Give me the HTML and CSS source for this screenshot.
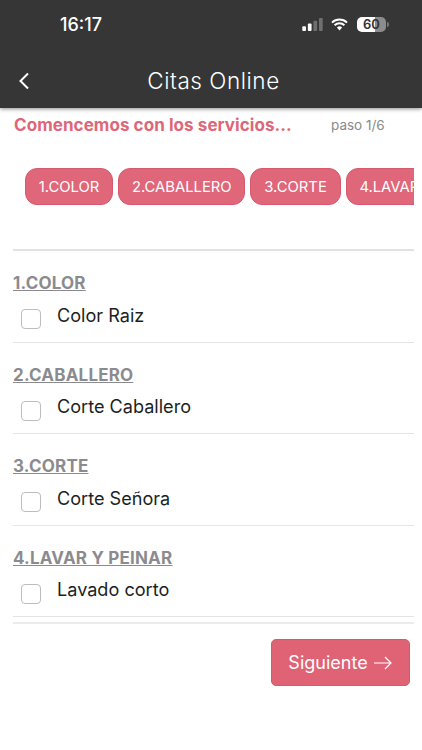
FILE: index.html
```
<!DOCTYPE html>
<html lang="es">
<head>
<meta charset="utf-8">
<title>Citas Online</title>
<link rel="stylesheet" href="styles.css">
</head>
<body>
<header class="appbar">
  <div class="status">
    <span class="time">16:17</span>
    <div class="status-icons">
      <svg class="signal" width="22" height="14" viewBox="0 0 22 14"><rect x="0" y="9" width="4" height="5" rx="1" fill="#fff"/><rect x="6" y="6" width="4" height="8" rx="1" fill="#fff"/><rect x="12" y="3" width="4" height="11" rx="1" fill="#6f6f6f"/><rect x="18" y="0" width="4" height="14" rx="1" fill="#6f6f6f"/></svg>
      <svg class="wifi" width="17" height="13" viewBox="0 0 17 13"><path d="M1 4.6a10.8 10.8 0 0 1 15 0M3.6 7.3a7 7 0 0 1 9.8 0" fill="none" stroke="#fff" stroke-width="2"/><path d="M5.9 9.5a3.7 3.7 0 0 1 5.2 0L8.5 12.4z" fill="#fff"/></svg>
      <div class="battery"><span class="battery-num">60</span></div>
      <span class="battery-tip"></span>
    </div>
  </div>
  <div class="navrow">
    <svg class="back" width="12" height="18" viewBox="0 0 12 18"><path d="M10 1.5 2.5 9l7.5 7.5" fill="none" stroke="#fff" stroke-width="2"/></svg>
    <h1 class="title">Citas Online</h1>
  </div>
</header>
<main class="content">
  <div class="lead">
    <h2 class="lead-title">Comencemos con los servicios...</h2>
    <span class="step">paso 1/6</span>
  </div>
  <div class="chips">
    <span class="chip">1.COLOR</span>
    <span class="chip">2.CABALLERO</span>
    <span class="chip">3.CORTE</span>
    <span class="chip">4.LAVAR Y PEINAR</span>
  </div>
  <div class="list">
    <section class="group">
      <h3 class="group-title">1.COLOR</h3>
      <label class="item"><span class="check"></span><span class="item-name">Color Raiz</span></label>
    </section>
    <section class="group">
      <h3 class="group-title">2.CABALLERO</h3>
      <label class="item"><span class="check"></span><span class="item-name">Corte Caballero</span></label>
    </section>
    <section class="group">
      <h3 class="group-title">3.CORTE</h3>
      <label class="item"><span class="check"></span><span class="item-name">Corte Señora</span></label>
    </section>
    <section class="group">
      <h3 class="group-title">4.LAVAR Y PEINAR</h3>
      <label class="item"><span class="check"></span><span class="item-name">Lavado corto</span></label>
    </section>
  </div>
  <div class="footer">
    <button class="next" type="button">Siguiente<svg class="arrow" width="18" height="14" viewBox="0 0 18 14"><path d="M0 7h17M11 1l6 6-6 6" fill="none" stroke="#fff" stroke-width="1.2"/></svg></button>
  </div>
</main>
</body>
</html>
```
FILE: styles.css
```
* { box-sizing: border-box; }
html, body { margin: 0; padding: 0; }
body {
  width: 422px;
  height: 750px;
  overflow: hidden;
  background: #fff;
  font-family: Inter, "Liberation Sans", sans-serif;
  color: #212529;
}
.appbar {
  height: 108px;
  background: #363636;
  box-shadow: 0 1px 4px rgba(0, 0, 0, 0.45);
  color: #fff;
  position: relative;
}
.status {
  height: 48px;
  padding: 16px 33px 0 60px;
  display: flex;
  justify-content: space-between;
  align-items: flex-start;
}
.time { font-size: 18px; font-weight: 500; line-height: 18px; }
.status-icons { display: flex; align-items: center; gap: 8px; height: 18px; margin-top: -1px; }
.signal { width: 21px; height: 13px; }
.battery {
  width: 29px;
  height: 15px;
  margin-left: 1px;
  border-radius: 5px;
  background: linear-gradient(90deg, #fff 0 62%, #8c8c8c 62% 100%);
  display: flex;
  align-items: center;
  justify-content: center;
}
.battery-num { color: #333; font-size: 13px; font-weight: 600; line-height: 15px; }
.battery-tip { width: 2px; height: 5px; margin-left: -7px; background: #777; border-radius: 0 2px 2px 0; }
.navrow {
  height: 60px;
  position: relative;
  display: flex;
  align-items: center;
  justify-content: center;
  padding-bottom: 4px;
  padding-top: 9px;
}
.back { position: absolute; left: 18px; top: 24px; }
.title {
  margin: 0 0 0 5px;
  font-family: Inter, sans-serif;
  font-size: 22.5px;
  font-weight: 300;
  letter-spacing: 0.55px;
  line-height: 28px;
}
.content { padding: 0 8px 0 13px; }
.lead {
  display: flex;
  align-items: center;
  height: 33px;
  padding: 0 0 0 1px;
}
.lead-title {
  margin: 0;
  width: 317px;
  font-size: 17px;
  font-weight: 700;
  letter-spacing: 0.07px;
  color: #dd6679;
}
.step { font-size: 13.5px; color: #8a8a8a; }
.chips {
  margin-top: 27px;
  padding-left: 12px;
  display: flex;
  gap: 5px;
  width: 401px;
  overflow: hidden;
  height: 83px;
  border-bottom: 2px solid #e2e2e2;
  align-items: flex-start;
}
.chip {
  flex: none;
  height: 37px;
  padding: 0 12.8px;
  display: flex;
  align-items: center;
  font-size: 14.8px;
  color: #fff;
  background: #e0667a;
  border: 1px solid #d65a6e;
  border-radius: 12px;
}
.list { width: 401px; }
.group {
  height: 91.5px;
  border-bottom: 1px solid #e4e4e4;
  padding-top: 22px;
}
.group-title {
  margin: 0;
  font-size: 17px;
  line-height: 20px;
  font-weight: 700;
  letter-spacing: 0.2px;
  color: #8b8b8f;
  text-decoration: underline;
}
.item { display: flex; align-items: flex-start; padding: 2px 0 0 8px; }
.check {
  flex: none;
  width: 20px;
  height: 20px;
  margin-top: 14px;
  background: #fff;
  border: 1px solid #bdbdbd;
  border-radius: 4px;
}
.item-name { margin: 7.5px 0 0 16px; font-size: 18.1px; line-height: 24px; color: #1c1f23; }
.footer {
  width: 401px;
  margin-top: 5px;
  border-top: 2px solid #ececec;
  padding-top: 15px;
  display: flex;
  justify-content: flex-end;
  padding-right: 4px;
}
.next {
  width: 139px;
  height: 47px;
  padding: 0 1px 0 0;
  font-family: Inter, sans-serif;
  font-size: 18px;
  color: #fff;
  background: #e06275;
  border: 1px solid #d65a6e;
  border-radius: 5px;
  display: flex;
  align-items: center;
  justify-content: center;
  gap: 6px;
}
.arrow { flex: none; }
```
